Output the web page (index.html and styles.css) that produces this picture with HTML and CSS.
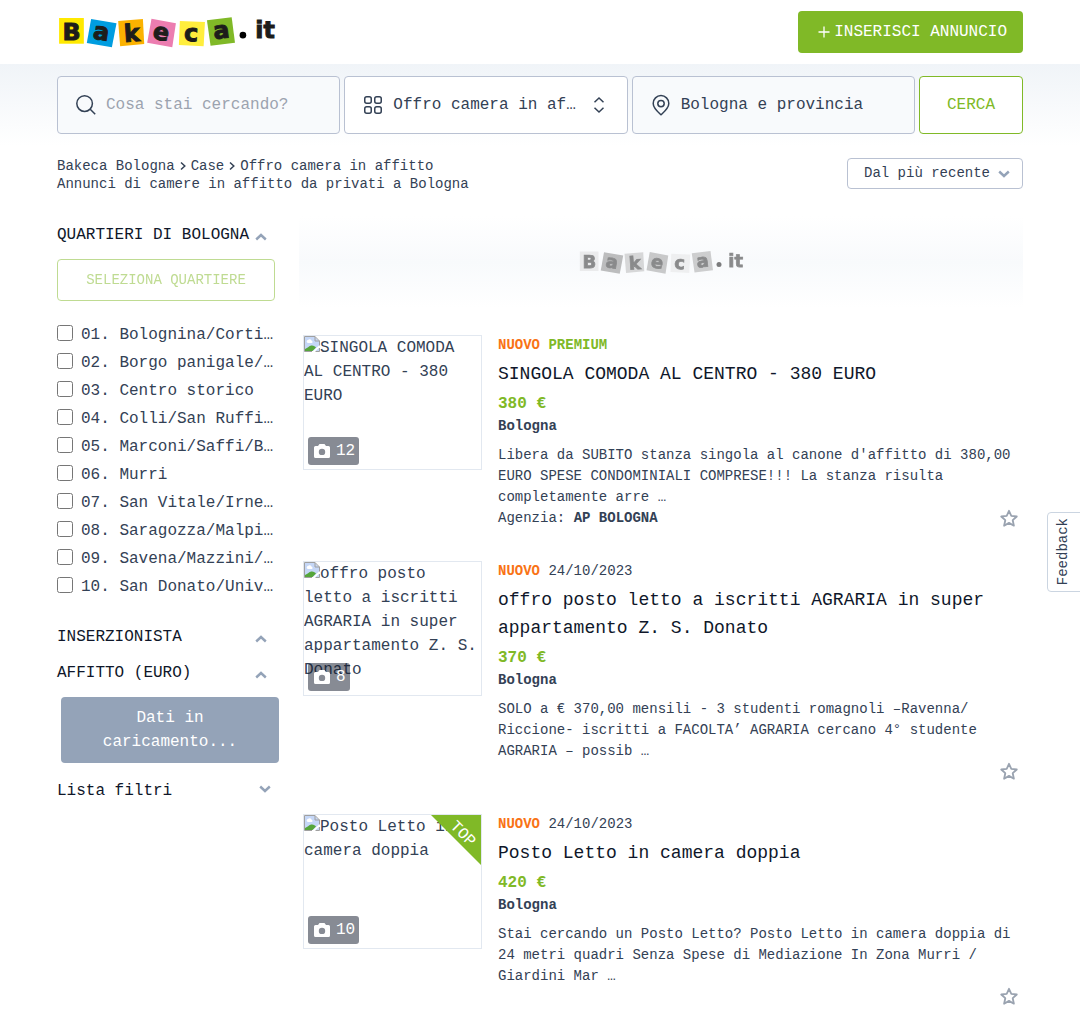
FILE: index.html
```html
<!DOCTYPE html>
<html lang="it">
<head>
<meta charset="utf-8">
<meta name="viewport" content="width=device-width, initial-scale=1">
<title>Bakeca.it</title>
<link rel="stylesheet" href="styles.css">
</head>
<body>
<svg class="sprite" aria-hidden="true">
  <symbol id="chevron" viewBox="0 0 12 12"><path d="M1.200 3.500 6 8l4.800-4.500" fill="none" stroke="currentColor" stroke-width="2.400"/></symbol>
  <symbol id="crumb" viewBox="0 0 8 12"><path d="M2 2.500 5.800 6 2 9.500" fill="none" stroke="currentColor" stroke-width="1.500"/></symbol>
  <symbol id="broken" viewBox="0 0 16 16">
    <path fill="#c5d7f7" d="M1 1h10l4 4v10H1z"/>
    <path fill="#fff" d="M3 6.500a1.500 1.500 0 0 1 1-2.400 2 2 0 0 1 3.600.6A1.300 1.300 0 0 1 8 7H4z"/>
    <path fill="#55a63b" d="M1 15v-2c3-1 4-3.500 7-3.500 2 0 3 1 4 2L8.500 15z"/>
    <path fill="#fff" d="M8.500 15.500 15.500 9v2.500L11 15.500z"/>
    <path fill="none" stroke="#a0a0a0" d="M8 15.500H.5V.5h10.500l4.500 4.500v4.500M11 .5v4.500h4.500M11.500 15.500h4V12"/>
  </symbol>
  <symbol id="camera" viewBox="0 0 16 14"><path fill="#fff" fill-rule="evenodd" d="M5.500 0h5L12 2h2.500A1.500 1.500 0 0 1 16 3.500v9a1.500 1.500 0 0 1-1.500 1.500h-13A1.500 1.500 0 0 1 0 12.500v-9A1.500 1.500 0 0 1 1.500 2H4zM8 4.700a3.200 3.200 0 1 0 0 6.400 3.200 3.200 0 0 0 0-6.400z"/></symbol>
  <symbol id="star" viewBox="0 0 20 20"><path d="M10 1.800l2.300 5.100 5.500.6-4.100 3.700 1.200 5.500L10 13.900l-4.900 2.800 1.200-5.500-4.100-3.700 5.500-.6z" fill="none" stroke="currentColor" stroke-width="1.800" stroke-linejoin="round"/></symbol>
</svg>

<header class="header">
  <div class="container header-row">
    <a href="#" aria-label="Bakeca.it" class="logo-link">
      <svg class="logo" viewBox="51 45 660 100">
        <g id="logo-art">
          <path fill="#ffe900" d="M54 51h75v78H54z"/>
          <path fill="#009de0" d="M151 54l77 13-14 73-76-13z"/>
          <path fill="#fbb200" d="M233 60l75-6 4 76-73 7z"/>
          <path fill="#ec7db0" d="M334 53l74 14-11 73-76-14z"/>
          <path fill="#ffee3d" d="M420 60l76 3-4 74-75-4z"/>
          <path fill="#80b927" d="M502 58l75-9 10 77-74 9z"/>
          <g class="logo-letters" text-anchor="middle">
            <text x="92" y="117">B</text>
            <text x="182" y="117" transform="rotate(9 182 97)">a</text>
            <text x="274" y="122" transform="rotate(-4 274 96)">k</text>
            <text x="363" y="118" transform="rotate(9 363 97)">e</text>
            <text x="454" y="121" transform="rotate(3 454 98)">c</text>
            <text x="546" y="113" transform="rotate(-7 546 92)">a</text>
            <text x="678" y="112">it</text>
          </g>
          <circle cx="611" cy="103" r="10"/>
        </g>
      </svg>
    </a>
    <button type="button" class="btn-post"><svg class="icon-plus" viewBox="0 0 20 20"><path d="M10 4.500v11M4.500 10h11" stroke="currentColor" stroke-width="1.300"/></svg>INSERISCI ANNUNCIO</button>
  </div>
</header>

<div class="search-band">
  <form class="container search">
    <label class="field">
      <svg class="icon" viewBox="0 0 24 24"><circle cx="10.600" cy="10.600" r="7.800"/><path d="M16.200 16.200 21.200 21.200"/></svg>
      <input type="text" placeholder="Cosa stai cercando?" aria-label="Cosa stai cercando?">
    </label>
    <label class="field field-white">
      <svg class="icon" viewBox="0 0 24 24"><rect x="3.750" y="3.750" width="6.500" height="6.500" rx="2"/><rect x="13.750" y="3.750" width="6.500" height="6.500" rx="2"/><rect x="3.750" y="13.750" width="6.500" height="6.500" rx="2"/><rect x="13.750" y="13.750" width="6.500" height="6.500" rx="2"/></svg>
      <select aria-label="Categoria"><option>Offro camera in af…</option></select>
      <svg class="icon" viewBox="0 0 24 24"><path d="M7.500 9.200 12 5l4.500 4.200M7.500 14.800 12 19l4.500-4.200"/></svg>
    </label>
    <label class="field">
      <svg class="icon" viewBox="0 0 24 24"><path d="M12 21.800c-3.500-3.300-7.800-6.900-7.800-11.400a7.800 7.800 0 0 1 15.600 0C19.800 14.900 15.500 18.500 12 21.800z"/><circle cx="12" cy="10.600" r="3.200"/></svg>
      <input type="text" value="Bologna e provincia" aria-label="Dove">
    </label>
    <button type="submit" class="btn-search">CERCA</button>
  </form>
</div>

<div class="container topline">
  <div>
    <nav class="crumbs" aria-label="Percorso">
      <a href="#">Bakeca Bologna</a><svg><use href="#crumb"/></svg><a href="#">Case</a><svg><use href="#crumb"/></svg><a href="#">Offro camera in affitto</a>
    </nav>
    <h1>Annunci di camere in affitto da privati a Bologna</h1>
  </div>
  <label class="sort">
    <select aria-label="Ordina"><option>Dal più recente</option></select>
    <svg class="chevron"><use href="#chevron"/></svg>
  </label>
</div>

<div class="container columns">
  <aside class="filters">
    <h2 class="filter-head">QUARTIERI DI BOLOGNA<svg class="chevron up"><use href="#chevron"/></svg></h2>
    <button type="button" class="btn-area" disabled>SELEZIONA QUARTIERE</button>
    <div class="areas">
      <label><input type="checkbox"><span>01. Bolognina/Corti…</span></label>
      <label><input type="checkbox"><span>02. Borgo panigale/…</span></label>
      <label><input type="checkbox"><span>03. Centro storico</span></label>
      <label><input type="checkbox"><span>04. Colli/San Ruffi…</span></label>
      <label><input type="checkbox"><span>05. Marconi/Saffi/B…</span></label>
      <label><input type="checkbox"><span>06. Murri</span></label>
      <label><input type="checkbox"><span>07. San Vitale/Irne…</span></label>
      <label><input type="checkbox"><span>08. Saragozza/Malpi…</span></label>
      <label><input type="checkbox"><span>09. Savena/Mazzini/…</span></label>
      <label><input type="checkbox"><span>10. San Donato/Univ…</span></label>
    </div>
    <h2 class="filter-head">INSERZIONISTA<svg class="chevron up"><use href="#chevron"/></svg></h2>
    <h2 class="filter-head">AFFITTO (EURO)<svg class="chevron up"><use href="#chevron"/></svg></h2>
    <button type="button" class="btn-loading">Dati in caricamento...</button>
    <h2 class="filter-head filter-list">Lista filtri<svg class="chevron"><use href="#chevron"/></svg></h2>
  </aside>

  <main class="results">
    <div class="banner"><svg class="logo-grey" viewBox="51 45 660 100"><use href="#logo-art"/></svg></div>

    <article class="ad">
      <div class="thumb">
        <svg class="broken"><use href="#broken"/></svg>SINGOLA COMODA AL CENTRO - 380 EURO
        <span class="photos"><svg><use href="#camera"/></svg>12</span>
      </div>
      <div class="ad-body">
        <p class="meta"><b class="new">NUOVO</b> <b class="premium">PREMIUM</b></p>
        <h3><a href="#">SINGOLA COMODA AL CENTRO - 380 EURO</a></h3>
        <p class="price">380 €</p>
        <p class="city">Bologna</p>
        <p class="text">Libera da SUBITO stanza singola al canone d'affitto di 380,00 EURO SPESE CONDOMINIALI COMPRESE!!! La stanza risulta completamente arre …</p>
        <div class="ad-foot"><span>Agenzia: <b>AP BOLOGNA</b></span><button type="button" class="fav" aria-label="Preferiti"><svg><use href="#star"/></svg></button></div>
      </div>
    </article>

    <article class="ad">
      <div class="thumb">
        <svg class="broken"><use href="#broken"/></svg>offro posto letto a iscritti AGRARIA in super appartamento Z. S. Donato
        <span class="photos"><svg><use href="#camera"/></svg>8</span>
      </div>
      <div class="ad-body">
        <p class="meta"><b class="new">NUOVO</b> 24/10/2023</p>
        <h3><a href="#">offro posto letto a iscritti AGRARIA in super appartamento Z. S. Donato</a></h3>
        <p class="price">370 €</p>
        <p class="city">Bologna</p>
        <p class="text">SOLO a € 370,00 mensili - 3 studenti romagnoli –Ravenna/<wbr>Riccione- iscritti a FACOLTA’ AGRARIA cercano 4° studente AGRARIA – possib …</p>
        <div class="ad-foot"><button type="button" class="fav" aria-label="Preferiti"><svg><use href="#star"/></svg></button></div>
      </div>
    </article>

    <article class="ad">
      <div class="thumb">
        <svg class="broken"><use href="#broken"/></svg>Posto Letto in camera doppia
        <span class="top"><span>TOP</span></span>
        <span class="photos"><svg><use href="#camera"/></svg>10</span>
      </div>
      <div class="ad-body">
        <p class="meta"><b class="new">NUOVO</b> 24/10/2023</p>
        <h3><a href="#">Posto Letto in camera doppia</a></h3>
        <p class="price">420 €</p>
        <p class="city">Bologna</p>
        <p class="text">Stai cercando un Posto Letto? Posto Letto in camera doppia di 24 metri quadri Senza Spese di Mediazione In Zona Murri / Giardini Mar …</p>
        <div class="ad-foot"><button type="button" class="fav" aria-label="Preferiti"><svg><use href="#star"/></svg></button></div>
      </div>
    </article>
  </main>
</div>

<button type="button" class="feedback">Feedback</button>
</body>
</html>
```
FILE: styles.css
```css
*, *::before, *::after { box-sizing: border-box; }

body {
  margin: 0;
  background: #fff;
  color: #334155;
  font-family: "Liberation Mono", "Courier New", monospace;
  font-size: 16px;
  line-height: 24px;
}

h1, h2, h3, p { margin: 0; font-weight: 400; }
a { color: inherit; text-decoration: none; }
button, input, select { font: inherit; color: inherit; margin: 0; }
button { cursor: pointer; }
svg { display: block; flex: none; }

.sprite { position: absolute; width: 0; height: 0; }

.container {
  max-width: 1024px;
  margin: 0 auto;
  padding: 0 29px;
}

/* Header */
.header-row {
  display: flex;
  align-items: center;
  justify-content: space-between;
  height: 64px;
}
.logo { width: 220px; height: 33px; }
.logo-letters {
  font-family: "DejaVu Sans", sans-serif;
  font-weight: 700;
  font-size: 72px;
  fill: #1d1d1b;
  stroke: #1d1d1b;
  stroke-width: 3px;
}
.btn-post {
  display: flex;
  align-items: center;
  height: 42px;
  padding: 0 16px;
  border: 0;
  border-radius: 4px;
  background: #80b927;
  color: #fff;
}
.icon-plus { width: 20px; height: 20px; }

/* Search */
.search-band {
  padding: 12px 0;
  background: linear-gradient(#f0f4f8, #fff);
}
.search { display: flex; gap: 4px; }
.field {
  display: flex;
  flex: 1;
  align-items: center;
  gap: 8px;
  min-width: 0;
  height: 58px;
  padding: 0 16px;
  border: 1px solid #b9c1d2;
  border-radius: 4px;
  background: #f8fafc;
}
.field-white { background: #fff; }
.field input, .field select {
  flex: 1;
  width: 0;
  min-width: 0;
  padding: 0;
  border: 0;
  outline: 0;
  background: transparent;
  appearance: none;
}
.field input::placeholder { color: #9ca3af; opacity: 1; }
.icon {
  width: 24px;
  height: 24px;
  fill: none;
  stroke: #334155;
  stroke-width: 1.5;
}
.btn-search {
  width: 104px;
  border: 1px solid #80b927;
  border-radius: 4px;
  background: #fff;
  color: #80b927;
}

/* Breadcrumb and sorting */
.topline {
  display: flex;
  align-items: flex-start;
  justify-content: space-between;
  padding-top: 11px;
  font-size: 14px;
  line-height: 18px;
}
.crumbs { display: flex; align-items: center; gap: 4px; }
.crumbs svg { width: 8px; height: 12px; }
.topline h1 { font-size: 14px; line-height: 18px; }
.sort {
  display: flex;
  align-items: center;
  gap: 7px;
  height: 31px;
  margin-top: 1px;
  padding: 0 12px 0 16px;
  border: 1px solid #b9c1d2;
  border-radius: 4px;
}
.sort select {
  padding: 0 0 2px;
  border: 0;
  background: transparent;
  appearance: none;
}
.chevron { width: 12px; height: 12px; color: #94a3b8; }
.up { margin-top: 4px; transform: rotate(180deg); }

/* Columns */
.columns {
  display: grid;
  grid-template-columns: 218px minmax(0, 1fr);
  gap: 24px;
  padding-top: 23px;
}
.filters { padding-top: 7px; }
.filter-head {
  display: flex;
  align-items: center;
  justify-content: space-between;
  margin-bottom: 12px;
  padding-right: 8px;
  color: #0f172a;
  font-size: 16px;
  line-height: 24px;
}
.btn-area {
  width: 100%;
  height: 42px;
  border: 1px solid #80b927;
  border-radius: 4px;
  background: #fff;
  color: #80b927;
  font-size: 14px;
  opacity: 0.5;
}
.areas { margin: 20px 0 24px; }
.areas label {
  display: flex;
  align-items: center;
  gap: 8px;
  height: 28px;
  white-space: nowrap;
}
.areas input { width: 16px; height: 16px; margin-bottom: 4px; }
.btn-loading {
  width: 100%;
  margin-left: 4px;
  padding: 9px 40px;
  border: 0;
  border-radius: 4px;
  background: #94a3b8;
  color: #fff;
}
.filter-list { margin-top: 16px; padding-right: 4px; }
.filter-list .chevron { margin-bottom: 4px; }

.banner {
  display: flex;
  align-items: center;
  justify-content: center;
  height: 92px;
  margin-bottom: 27px;
  background: linear-gradient(#fff, #f8fafc, #fff);
}
.logo-grey { width: 165px; height: 25px; filter: grayscale(1); opacity: 0.5; }

/* Ads */
.ad {
  display: flex;
  gap: 16px;
  margin-bottom: 32px;
  padding-left: 4px;
}
.thumb {
  position: relative;
  flex: none;
  width: 179px;
  height: 135px;
  overflow: hidden;
  border: 1px solid #e2e8f0;
}
.broken { display: inline-block; width: 16px; height: 16px; vertical-align: baseline; }
.photos {
  position: absolute;
  left: 4px;
  bottom: 4px;
  display: flex;
  align-items: center;
  gap: 6px;
  height: 28px;
  padding: 0 4px 0 6px;
  border-radius: 3px;
  background: rgba(15, 23, 42, 0.5);
  color: #fff;
}
.photos svg { width: 16px; height: 14px; }
.top {
  position: absolute;
  top: 0;
  right: 0;
  display: flex;
  align-items: center;
  justify-content: center;
  width: 50px;
  height: 50px;
  padding: 0 0 12px 12px;
  background: #80b927;
  color: #fff;
  clip-path: polygon(0 0, 100% 0, 100% 100%);
}
.top span { transform: rotate(45deg); }
.ad-body {
  flex: 1;
  min-width: 0;
  font-size: 14px;
  line-height: 21px;
}
.new { color: #f97316; }
.premium, .price { color: #80b927; }
.ad h3 {
  margin: 4px 0;
  color: #0f172a;
  font-size: 18px;
  line-height: 28px;
}
.price { font-size: 16px; line-height: 24px; font-weight: 700; }
.city { margin-bottom: 8px; font-weight: 700; }
.ad-foot {
  display: flex;
  align-items: center;
  justify-content: space-between;
  padding-right: 4px;
}
.fav {
  margin-left: auto;
  padding: 0;
  border: 0;
  background: none;
  color: #9aa3b0;
}
.fav svg { width: 20px; height: 20px; }

.feedback {
  position: fixed;
  top: 512px;
  right: -1px;
  width: 34px;
  height: 80px;
  padding: 0 2px 0 0;
  border: 1px solid #cbd5e1;
  border-radius: 4px 0 0 4px;
  background: #fff;
  font-size: 14px;
  writing-mode: sideways-lr;
  text-align: center;
}
```
